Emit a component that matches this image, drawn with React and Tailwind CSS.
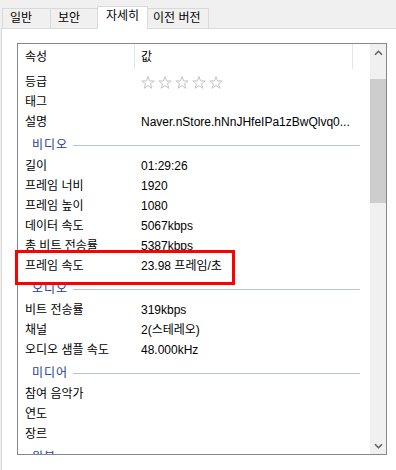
import React from "react";

const FONT = { fontFamily: '"Liberation Sans", "Noto Sans CJK KR", sans-serif' };

const rows = [
  { k: "등급", stars: true },
  { k: "태그" },
  { k: "설명", v: "Naver.nStore.hNnJHfeIPa1zBwQlvq0..." },
  { group: "비디오" },
  { k: "길이", v: "01:29:26" },
  { k: "프레임 너비", v: "1920" },
  { k: "프레임 높이", v: "1080" },
  { k: "데이터 속도", v: "5067kbps" },
  { k: "총 비트 전송률", v: "5387kbps" },
  { k: "프레임 속도", v: "23.98 프레임/초" },
  { group: "오디오" },
  { k: "비트 전송률", v: "319kbps" },
  { k: "채널", v: "2(스테레오)" },
  { k: "오디오 샘플 속도", v: "48.000kHz" },
  { group: "미디어" },
  { k: "참여 음악가" },
  { k: "연도" },
  { k: "장르" },
  { group: "원본" },
];

function Star() {
  return (
    <svg width="14" height="14" viewBox="0 0 14 14">
      <polygon
        points="7,0.5 8.53,4.9 13.18,4.99 9.47,7.8 10.82,12.26 7,9.6 3.18,12.26 4.53,7.8 0.82,4.99 5.47,4.9"
        fill="none"
        stroke="#c4c4c4"
        strokeWidth="1"
        strokeLinejoin="round"
      />
    </svg>
  );
}

function Chevron({ down }) {
  return (
    <svg width="9" height="6" viewBox="0 0 9 6">
      <path
        d={down ? "M1 1.2 L4.5 4.7 L8 1.2" : "M1 4.8 L4.5 1.3 L8 4.8"}
        fill="none"
        stroke="#606060"
        strokeWidth="1.6"
      />
    </svg>
  );
}

function Row({ row }) {
  if (row.group) {
    return (
      <div className="h-[24px] flex items-center pl-[14px] pr-[10px] pt-[2px]">
        <span className="text-[12px] text-[#1e3c96] tracking-[1px]">{row.group}</span>
        <div className="flex-1 ml-[5px] h-px bg-[#b9c2da]" />
      </div>
    );
  }
  return (
    <div className="h-[20px] flex items-center text-[12px] text-black leading-[20px]">
      <div className="w-[117px] pl-[7px] whitespace-nowrap">{row.k}</div>
      <div className="pl-[6px] whitespace-nowrap flex items-center">
        {row.stars ? (
          <div className="flex gap-[3px] pt-[1px]">
            <Star />
            <Star />
            <Star />
            <Star />
            <Star />
          </div>
        ) : (
          row.v
        )}
      </div>
    </div>
  );
}

export default function App() {
  return (
    <div className="w-[396px] h-[470px] bg-[#f0f0f0] overflow-hidden relative flex flex-col" style={FONT}>
      {/* Tabs */}
      <div className="h-[28px] flex items-end pl-[2px] text-[12px] text-black shrink-0">
        <div className="w-[48px] h-[20px] border-l border-t border-[#d9d9d9] pl-[7px] leading-[18px]">일반</div>
        <div className="w-[47px] h-[20px] border-l border-t border-[#d9d9d9] pl-[7px] leading-[18px]">보안</div>
        <div className="w-[51px] h-[23px] -mb-px border-l border-t border-r border-[#d9d9d9] bg-white pl-[8px] leading-[18px] relative z-10">
          자세히
        </div>
        <div className="w-[61px] h-[20px] border-t border-r border-[#d9d9d9] pl-[5px] leading-[18px]">이전 버전</div>
      </div>

      {/* Panel */}
      <div className="flex-1 ml-[1px] bg-white border-l border-t border-[#d9d9d9] pl-[15px] pt-[14px]">
        <div className="w-[370px] h-[412px] border border-[#828790] flex overflow-hidden">
          <div className="w-[352px] overflow-hidden">
            <div className="h-[25px] flex items-center text-[12px] text-black">
              <div className="w-[117px] h-full pl-[7px] flex items-center border-r border-[#e5e5e5]">속성</div>
              <div className="w-[218px] h-full pl-[6px] flex items-center border-r border-[#e5e5e5]">값</div>
            </div>
            <div className="pt-[3px]">
              {rows.map((r, i) => (
                <Row key={i} row={r} />
              ))}
            </div>
          </div>
          <div className="w-[16px] ml-auto bg-[#f0f0f0] flex flex-col">
            <div className="h-[17px] flex items-center justify-center">
              <Chevron />
            </div>
            <div className="mt-[18px] h-[124px] bg-[#cdcdcd]" />
            <div className="flex-1" />
            <div className="h-[17px] flex items-center justify-center">
              <Chevron down />
            </div>
          </div>
        </div>
      </div>

      {/* annotation box */}
      <div className="absolute left-[15px] top-[250px] w-[220px] h-[35px] border-[3px] border-[#ff0000]" />
    </div>
  );
}
